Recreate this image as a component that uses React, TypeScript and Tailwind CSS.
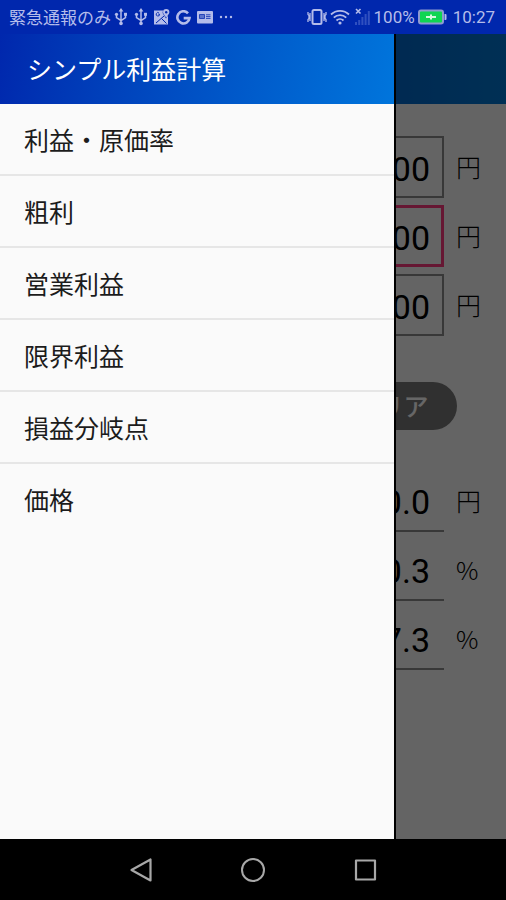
import { useState } from "react";

const menuItems = [
  { id: "cost-rate", label: "利益・原価率" },
  { id: "gross", label: "粗利" },
  { id: "operating", label: "営業利益" },
  { id: "marginal", label: "限界利益" },
  { id: "break-even", label: "損益分岐点" },
  { id: "price", label: "価格" },
];

const results = [
  { id: "profit", label: "利益", value: "0.0", unit: "円" },
  { id: "profit-rate", label: "利益率", value: "0.3", unit: "%" },
  { id: "cost-rate", label: "原価率", value: "7.3", unit: "%" },
];

function UsbIcon() {
  return (
    <svg viewBox="0 0 14 18" className="h-[18px] w-[14px]" fill="none" stroke="currentColor" strokeWidth="1.5">
      <path d="M7 3v12M2.5 6.5v3.2L7 12.5l4.5-3V6" />
      <path d="M7 0 4.6 3.6h4.8z" fill="currentColor" stroke="none" />
      <circle cx="7" cy="15.4" r="1.8" fill="currentColor" stroke="none" />
      <circle cx="2.5" cy="6.3" r="1.6" fill="currentColor" stroke="none" />
      <path d="M10 4.8h3v3h-3z" fill="currentColor" stroke="none" />
    </svg>
  );
}

function StatusBar() {
  return (
    <header className="flex h-[34px] shrink-0 items-center justify-between bg-[#0027ad] pl-[9px] pr-[11px] text-[17px] leading-[24px] text-[#b4bcea]">
      <div className="flex items-center gap-[6px]">
        <span className="-mr-[3px] pt-px">緊急通報のみ</span>
        <UsbIcon />
        <UsbIcon />
        {/* map */}
        <svg viewBox="0 0 16 16" className="size-4">
          <path d="M0 1.5h9a4 4 0 0 0 .5 4L12 9.5l2-3v9H0z" fill="currentColor" />
          <path d="M2 14 10 7M7.5 9.5l5 5" stroke="#0027ad" strokeWidth="1" />
          <path d="M5.8 5.3H4.4M5.6 5.3a1.7 1.7 0 1 1-.6-1.3" stroke="#0027ad" strokeWidth=".9" fill="none" />
          <path d="M12.2 0a3.2 3.2 0 0 1 3.2 3.2c0 2-2 3-3.2 5.6C11 6.2 9 5.2 9 3.2A3.2 3.2 0 0 1 12.2 0z" fill="currentColor" />
          <circle cx="12.2" cy="3.2" r="1.2" fill="#0027ad" />
        </svg>
        {/* google */}
        <svg viewBox="0 0 16 16" className="size-[15px]" fill="none" stroke="currentColor" strokeWidth="2.8">
          <path d="M12.8 3.5A6.5 6.5 0 1 0 14.400 8.6H8.2" />
        </svg>
        {/* news */}
        <svg viewBox="0 0 16 16" className="size-4">
          <rect x="0" y="2" width="16" height="12.5" rx="1" fill="currentColor" />
          <path d="M2.5 5.5h5v4h-5zM9 5.8h4.5M9 7.6h4.5M9 9.4h4.5" stroke="#0027ad" strokeWidth=".8" fill="none" />
          <path d="M3 6h4v3H3z" fill="#0027ad" fillOpacity=".5" />
        </svg>
        <svg viewBox="0 0 14 4" className="h-1 w-[14px]" fill="currentColor">
          <circle cx="2" cy="2" r="1.2" />
          <circle cx="7" cy="2" r="1.2" />
          <circle cx="12" cy="2" r="1.2" />
        </svg>
      </div>
      <div className="flex items-center gap-[3px]">
        {/* vibrate */}
        <svg viewBox="0 0 20 18" className="h-[18px] w-5" fill="none" stroke="currentColor">
          <rect x="5.5" y="2" width="9" height="14" rx="1.5" strokeWidth="2" />
          <path d="M1 4v2.5l1 1v3l-1 1V14M3 5v8M19 4v2.5l-1 1v3l1 1V14M17 5v8" strokeWidth="1.3" />
        </svg>
        {/* wifi */}
        <svg viewBox="0 0 20 16" className="h-4 w-5" fill="none" stroke="currentColor" strokeWidth="1.8">
          <path d="M1 5.5a13 13 0 0 1 18 0M3.8 8.6a9 9 0 0 1 12.4 0M6.5 11.5a5 5 0 0 1 7 0" />
          <circle cx="10" cy="14" r="1.6" fill="currentColor" stroke="none" />
        </svg>
        {/* no signal */}
        <svg viewBox="0 0 18 18" className="size-[18px]">
          <path d="M3 1l4.5 4.5M7.5 1 3 5.5" stroke="currentColor" strokeWidth="1.6" />
          <path d="M2 14h2v3H2zM5.2 12h2v5h-2zM8.4 9h2v8h-2zM11.6 6h2v11h-2zM14.8 3h2v14h-2z" fill="#3050c0" />
        </svg>
        <span>100%</span>
        {/* battery */}
        <svg viewBox="0 0 29 16" className="h-4 w-[29px]">
          <rect x="1" y="1.5" width="24" height="13" rx="2" fill="#0fd552" stroke="#8e9bd0" strokeWidth="2" />
          <path d="M26.5 5h1a1 1 0 0 1 1 1v4a1 1 0 0 1-1 1h-1z" fill="currentColor" />
          <path d="M8 8h10M13 5.5v5" stroke="#d5f8e0" strokeWidth="2" />
        </svg>
        <span className="ml-[3px]">10:27</span>
      </div>
    </header>
  );
}

function Unit({ children }: { children: string }) {
  return <span className="w-[25px] font-['Noto_Sans_CJK_JP',sans-serif] text-[25px] font-light">{children}</span>;
}

function Calculator() {
  const [values, setValues] = useState(["100", "100", "100"]);
  const fields = ["販売価格", "仕入原価", "経費"];

  return (
    <div className="flex min-h-full flex-1 flex-col bg-[#fafafa]">
      <div className="h-[70px] bg-linear-to-r from-[#0028b0] to-[#0078d4]" />
      <form className="flex flex-col pr-[25px] pt-8" onSubmit={(e) => e.preventDefault()}>
        <div className="flex flex-col gap-[7px]">
          {fields.map((field, i) => (
            <label key={field} className="flex items-center gap-3 text-black">
              <input
                aria-label={field}
                inputMode="numeric"
                value={values[i]}
                onChange={(e) => setValues(values.map((v, n) => (n === i ? e.target.value : v)))}
                className={`h-[62px] min-w-0 flex-1 pt-1 text-right text-[34px] outline-none ${
                  i === 1 ? "border-3 border-[#ff3a80] pr-[11px]" : "border-2 border-[#8c8c8c] pr-3"
                }`}
              />
              <Unit>円</Unit>
            </label>
          ))}
        </div>
        <button
          type="button"
          onClick={() => setValues(["", "", ""])}
          className="mr-6 mt-[46px] h-12 w-[132px] self-end rounded-full bg-[#787878] pt-1 text-[25px] font-medium text-white"
        >
          クリア
        </button>
        <div className="mt-10 flex flex-col gap-[7px]">
          {results.map((r) => (
            <div key={r.id} className="flex items-center gap-3 text-black">
              <output
                aria-label={r.label}
                className="flex h-[62px] flex-1 items-center justify-end border-b-2 border-[#8c8c8c] pr-[14px] pt-1 text-[34px]"
              >
                {r.value}
              </output>
              <Unit>{r.unit}</Unit>
            </div>
          ))}
        </div>
      </form>
    </div>
  );
}

function Drawer() {
  return (
    <aside className="absolute inset-y-0 left-0 w-[396px] max-w-[80%] border-r-2 border-black bg-[#fafafa]">
      <h1 className="flex h-[70px] items-center bg-linear-100 from-[#0027ad] to-[#0075dc] pl-[27px] pt-1 text-[25px] font-normal text-white">
        シンプル利益計算
      </h1>
      <nav>
        <ul className="divide-y-2 divide-[#e6e6e6]">
          {menuItems.map((item) => (
            <li key={item.id}>
              <a href={`#${item.id}`} className="flex h-[70px] items-center pl-6 pt-1.5 text-[25px] text-[#1c1c1c]">
                {item.label}
              </a>
            </li>
          ))}
        </ul>
      </nav>
    </aside>
  );
}

function NavigationBar() {
  return (
    <footer className="flex h-[61px] shrink-0 items-center justify-center gap-[88px] bg-black text-[#a8a8a8]">
      <button type="button" aria-label="戻る">
        <svg viewBox="0 0 24 24" className="size-6" fill="none" stroke="currentColor" strokeWidth="2.2" strokeLinejoin="round">
          <path d="M21.5 1.5v21L2.5 12z" />
        </svg>
      </button>
      <button type="button" aria-label="ホーム">
        <svg viewBox="0 0 24 24" className="size-6" fill="none" stroke="currentColor" strokeWidth="2">
          <circle cx="12" cy="12" r="11" />
        </svg>
      </button>
      <button type="button" aria-label="履歴">
        <svg viewBox="0 0 24 24" className="size-6" fill="none" stroke="currentColor" strokeWidth="2.2" strokeLinejoin="round">
          <rect x="3" y="2.5" width="19" height="19" />
        </svg>
      </button>
    </footer>
  );
}

export default function App() {
  return (
    <div className="flex min-h-screen flex-col font-[Roboto,'Noto_Sans_CJK_JP',sans-serif]">
      <StatusBar />
      <main className="relative flex flex-1 flex-col">
        <Calculator />
        {/* scrim behind the open drawer */}
        <div className="absolute inset-0 bg-black/60" />
        <Drawer />
      </main>
      <NavigationBar />
    </div>
  );
}
